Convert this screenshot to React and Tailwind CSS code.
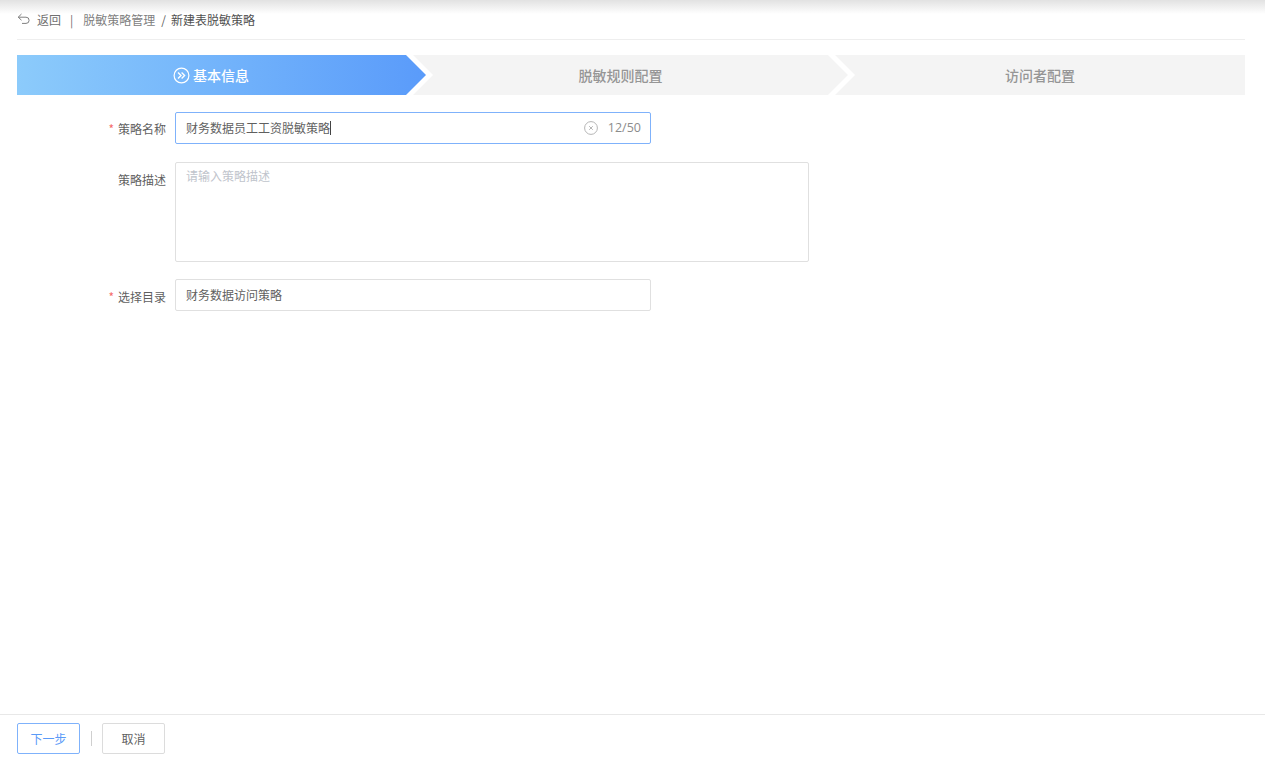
import React from "react";

function Chevrons() {
  return (
    <svg width="17" height="17" viewBox="0 0 17 17" fill="none" stroke="currentColor" className="shrink-0">
      <circle cx="8.5" cy="8.5" r="7.4" strokeWidth="1.2" />
      <path d="M5 5.5 L8 8.5 L5 11.5 M8.6 5.5 L11.6 8.5 L8.6 11.5" strokeWidth="1.4" />
    </svg>
  );
}

function Row({ label, required, children, labelTop = "pt-[10px]" }) {
  return (
    <div className="flex">
      <div className={`w-[149px] shrink-0 flex justify-end items-start text-[12px] leading-[20px] text-[#5f5f5f] ${labelTop}`}>
        {required && <span className="text-[#f56c6c] mr-[4px]">*</span>}
        <span>{label}</span>
      </div>
      <div className="ml-[9px]">{children}</div>
    </div>
  );
}

export default function App() {
  return (
    <div className="relative h-[763px] w-full bg-white overflow-hidden flex flex-col text-[12px] text-[#5f5f5f] font-['Noto_Sans_CJK_SC','Noto_Sans',sans-serif]">
      <div className="absolute top-0 left-0 right-0 h-[14px] bg-gradient-to-b from-[#e2e2e2] to-white" />
      <div className="relative px-[17px] pt-[11px]">
        <div className="flex items-center h-[18px] text-[12px] leading-[18px]">
          <svg width="14" height="12" viewBox="0 0 14 12" fill="none" stroke="#808080" strokeWidth="1" className="mt-[-3px]">
            <path d="M4.5 1 L1.2 4.2 L4.5 7.2 M1.2 4.2 H9 A3 3 0 0 1 9 10.4 H5" />
          </svg>
          <span className="ml-[6px] text-[#707070]">返回</span>
          <span className="ml-[9px] text-[#707070]">|</span>
          <span className="ml-[10px] text-[#808080]">脱敏策略管理</span>
          <span className="mx-[6px] text-[#5f5f5f]">/</span>
          <span className="ml-[-1px] text-[#505050]">新建表脱敏策略</span>
        </div>
        <div className="mt-[10px] h-px bg-[#eeeeee] mr-[3px]" />
        <div className="flex h-[40px] mt-[15px] w-[1228px] text-[14px] font-medium">
          <div className="w-[409px] shrink-0 pr-[20px] flex items-center justify-center gap-[3px] text-white bg-gradient-to-r from-[#8ccbfb] to-[#5a9bfa] [clip-path:polygon(0_0,389px_0,409px_50%,389px_100%,0_100%)]">
            <span className="ml-[-1px]"><Chevrons /></span>
            <span>基本信息</span>
          </div>
          <div className="w-[435px] shrink-0 ml-[-13px] pr-[20px] flex items-center justify-center text-[#969696] bg-[#f4f4f4] [clip-path:polygon(0_0,415px_0,435px_50%,415px_100%,0_100%,20px_50%)]">
            <span className="mt-[1px]">脱敏规则配置</span>
          </div>
          <div className="w-[410px] shrink-0 ml-[-13px] flex items-center justify-center text-[#969696] bg-[#f4f4f4] [clip-path:polygon(0_0,100%_0,100%_100%,0_100%,20px_50%)]">
            <span className="mt-[1px]">访问者配置</span>
          </div>
        </div>

        <div className="mt-[17px] flex flex-col">
          <Row label="策略名称" required labelTop="pt-[7px]">
            <div className="w-[476px] h-[32px] flex items-center border border-[#7fb2fb] rounded-[2px] pl-[10px] pr-[9px] text-[#5f5f5f]">
              <span className="leading-[20px] mt-[-1px]">财务数据员工工资脱敏策略</span>
              <span className="w-px h-[14px] bg-[#444]" />
              <svg width="14" height="14" viewBox="0 0 14 14" fill="none" stroke="#b5b5b5" className="ml-auto">
                <circle cx="7" cy="7" r="6.4" />
                <path d="M5.2 5.2 L8.8 8.8 M8.8 5.2 L5.2 8.8" />
              </svg>
              <span className="ml-[10px] text-[12.5px] text-[#8c8c8c] font-['Open_Sans','Noto_Sans',sans-serif]">12/50</span>
            </div>
          </Row>
          <div className="mt-[18px]">
            <Row label="策略描述" labelTop="pt-[8px]">
              <div className="w-[634px] h-[100px] border border-[#e0e0e0] rounded-[2px] px-[10px] py-[3px] leading-[20px] text-[#c0c4cc]">
                请输入策略描述
              </div>
            </Row>
          </div>
          <div className="mt-[17px]">
            <Row label="选择目录" required labelTop="pt-[8px]">
              <div className="w-[476px] h-[32px] flex items-center border border-[#e0e0e0] rounded-[2px] px-[10px] text-[#5f5f5f]">
                财务数据访问策略
              </div>
            </Row>
          </div>
        </div>
      </div>

      <div className="mt-auto h-[49px] border-t border-[#e8e8e8] px-[17px] pt-[8px] flex items-start">
        <button className="w-[63px] h-[31px] border border-[#7fb2fb] rounded-[2px] text-[#5b9bf8] text-[12px]">下一步</button>
        <span className="w-px h-[15px] bg-[#cfcfcf] ml-[11px] mt-[8px]" />
        <button className="ml-[10px] w-[63px] h-[31px] border border-[#dcdcdc] rounded-[2px] text-[#5f5f5f] text-[12px]">取消</button>
      </div>
    </div>
  );
}
